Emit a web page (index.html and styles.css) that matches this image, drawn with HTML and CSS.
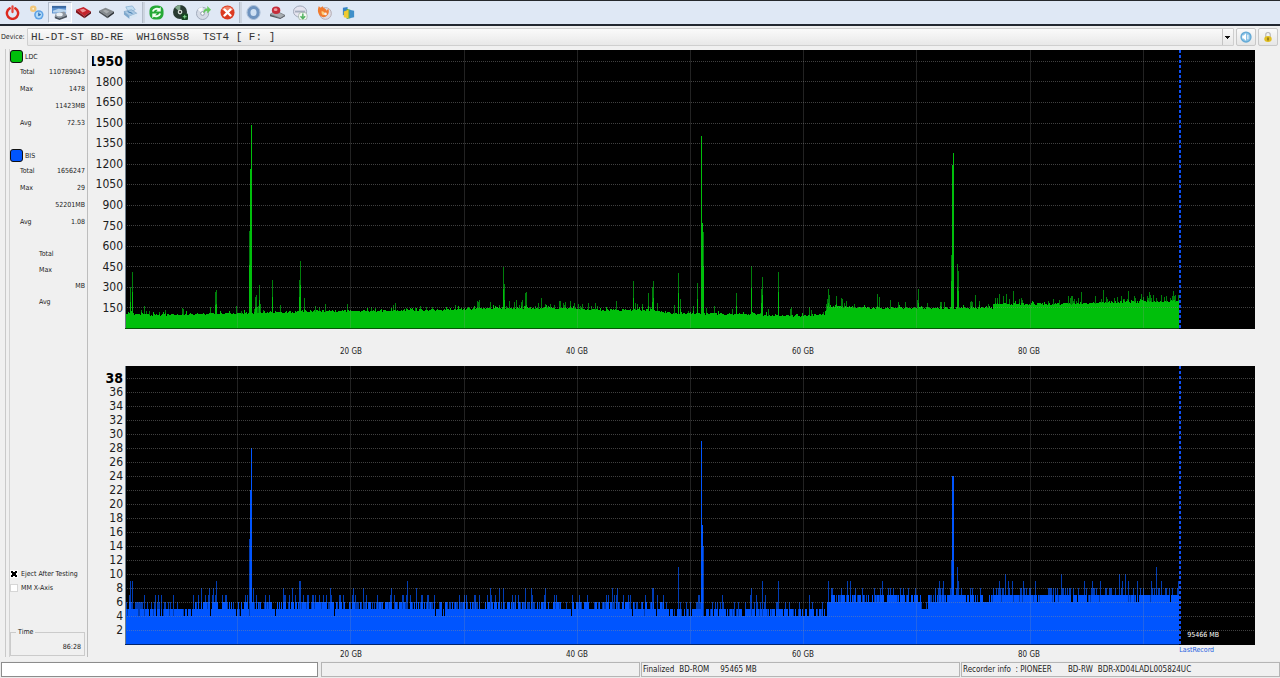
FILE: index.html
```html
<!DOCTYPE html>
<html lang="en">
<head>
<meta charset="utf-8">
<title>Disc quality scan</title>
<link rel="stylesheet" href="styles.css">
</head>
<body>
<div class="app">
  <header class="toolbar">
    <div class="tools tools-six">
      <button class="tool" aria-label="Exit"><svg viewBox="0 0 16 16"><path d="M5 3.6A6 6 0 1 0 11 3.6" fill="none" stroke="#dc2a20" stroke-width="2.6" stroke-linecap="round"/><path d="M8 1.5v6" stroke="#e8443a" stroke-width="2.4" stroke-linecap="round"/></svg></button>
      <button class="tool" aria-label="Settings"><svg viewBox="0 0 16 16"><circle cx="4.5" cy="4" r="3.5" fill="#f1c77b"/><circle cx="4.5" cy="4" r="1" fill="#fff4d8"/><circle cx="10.5" cy="10.5" r="5" fill="#5fa3e6"/><circle cx="10.5" cy="10.5" r="3.3" fill="#b5dcf8"/><path d="M10.5 8v3l2-1" fill="none" stroke="#286cb4" stroke-width="1.2"/></svg></button>
      <button class="tool tool-on" aria-label="Scan"><svg viewBox="0 0 16 16"><path d="M0 1h15v8H0z" fill="#5a8fcc"/><path d="M0 1h15v2H0z" fill="#39679f"/><path d="M1 6l6-2 8 1v3H1z" fill="#b9d4ed"/><path d="M4 9l9-2 3 4-8 3-5-2z" fill="#8c949e"/><ellipse cx="8" cy="10" rx="3.500" ry="2" fill="#e7edf2"/><path d="M3 12l5 2 8-3v2l-8 3-5-2z" fill="#4b535d"/></svg></button>
      <button class="tool" aria-label="Burn"><svg viewBox="0 0 16 16"><path d="M0 5l8-3 8 5-7 5z" fill="#c4232c"/><path d="M0 5l9 7v2L0 8z" fill="#80121a"/><path d="M16 7l-7 5v2l7-5z" fill="#5c1016"/><path d="M4 5l4-1 3 2-4 2z" fill="#ed9294"/></svg></button>
      <button class="tool" aria-label="Memory"><svg viewBox="0 0 16 16"><path d="M0 6l7-3 9 4-7 5z" fill="#858a8e"/><path d="M0 6l9 6v2L0 8z" fill="#4d5256"/><path d="M16 7l-7 5v2l7-5z" fill="#303438"/><path d="M4 6l3-1 4 2-3 2z" fill="#a9adb0"/></svg></button>
      <button class="tool" aria-label="Print"><svg viewBox="0 0 16 16"><path d="M3 2l7-1 3 4-7 3z" fill="#c0dcf2" stroke="#7fa9cd" stroke-width=".7"/><path d="M1 7l8-2 6 4-8 3z" fill="#a9c8e4" stroke="#7fa3c4" stroke-width=".7"/><path d="M1 7l6 5v3L1 10z" fill="#7da7cd"/><path d="M7 12l8-3v3l-8 3z" fill="#d8e7f4"/><path d="M5 7l5 2" stroke="#3974a8"/></svg></button>
    </div>
    <span class="divider"></span>
    <div class="tools tools-four">
      <button class="tool" aria-label="Refresh"><svg viewBox="0 0 16 16"><rect x=".5" y=".5" width="15" height="15" rx="6" fill="#25a936"/><path d="M4 7c1-3 5-4 7-2M12 9c-1 3-5 4-7 2" fill="none" stroke="#f2fff2" stroke-width="2"/><path d="M12.500 2v5h-5zM3.500 14V9h5z" fill="#f2fff2"/></svg></button>
      <button class="tool" aria-label="Read disc"><svg viewBox="0 0 16 16"><circle cx="7.500" cy="7.500" r="7.500" fill="#293b33"/><path d="M7.500 7.500L2 3a7 7 0 0 1 6-3z" fill="#81a88b"/><circle cx="7.500" cy="7.500" r="2.500" fill="#d4ddd7"/><circle cx="7.500" cy="7.500" r="1" fill="#111"/><rect x="9" y="9" width="7" height="7" rx="1" fill="#174723"/><path d="M10.500 12.500h4M12.500 10.500v4" stroke="#8ae399"/></svg></button>
      <button class="tool" aria-label="Create disc"><svg viewBox="0 0 16 16"><circle cx="7" cy="9" r="6.500" fill="#d5dbe6" stroke="#9fa9ba"/><path d="M7 9L2 5a6 6 0 0 1 5-3z" fill="#f7f8fc"/><circle cx="7" cy="9" r="2" fill="#fff" stroke="#8d98a9"/><path d="M8 9c0-4 1-5 4-5V1l4 4-4 4V6c-2 0-2 1-4 3z" fill="#65c95e"/></svg></button>
      <button class="tool" aria-label="Stop"><svg viewBox="0 0 16 16"><circle cx="8" cy="8" r="7.500" fill="#dc3a20"/><path d="M2 5a7 7 0 0 1 12 0c-3 2-9 2-12 0z" fill="#f08066"/><path d="M4.800 4.800l6.400 6.400M11.200 4.800l-6.400 6.400" stroke="#fff" stroke-width="2.600" stroke-linecap="round"/></svg></button>
    </div>
    <span class="divider"></span>
    <div class="tools tools-five">
      <button class="tool" aria-label="Disc"><svg viewBox="0 0 16 16"><ellipse cx="8" cy="8" rx="5" ry="5.500" fill="#cfe0f3" stroke="#6e93bf" stroke-width="3.500"/><ellipse cx="8" cy="8" rx="7" ry="7.500" fill="none" stroke="#a3b9d3"/></svg></button>
      <button class="tool" aria-label="Drive"><svg viewBox="0 0 16 16"><path d="M0 10l6-4 10 5-5 3z" fill="#a8adb2" stroke="#686d72" stroke-width=".7"/><path d="M0 10l11 4 5-3v1l-5 3L0 12z" fill="#55595e"/><ellipse cx="6.500" cy="5.500" rx="4.500" ry="4" fill="#c52c3a"/><ellipse cx="6" cy="5" rx="2" ry="1.500" fill="#efa0a5"/></svg></button>
      <button class="tool" aria-label="Save disc"><svg viewBox="0 0 16 16"><ellipse cx="7.500" cy="7" rx="7" ry="6" fill="#e5e4ef" stroke="#9ca3b4"/><path d="M2 7h11" stroke="#a5adbd" stroke-width="2"/><rect x="6" y="8" width="9" height="8" rx="3" fill="#f5faf5" stroke="#93a699" stroke-width=".7"/><path d="M10.500 9v5M8 12l2.500 2.500L13 12" fill="none" stroke="#56b463" stroke-width="1.600"/></svg></button>
      <button class="tool" aria-label="Burn image"><svg viewBox="0 0 16 16"><circle cx="9" cy="9" r="6.300" fill="#dddce4" stroke="#b3a9b0"/><path d="M2 1c2 3 3 1 4 0 0 3 4 2 4 5l2-2c2 4-1 9-5 9S-1 8 2 1z" fill="#f17b2f"/><path d="M5 6c2 2 3 0 3 3s-4 2-3-3z" fill="#ffd17e"/><circle cx="9" cy="9.500" r="1.500" fill="#f6eef0"/></svg></button>
      <button class="tool" aria-label="Charts"><svg viewBox="0 0 16 16"><path d="M2 3l5-1v8l-5 1z" fill="#3784c7"/><path d="M6 4l4 1v9l-4 1z" fill="#61ad46"/><path d="M9 5l5 1v7l-5 1z" fill="#3f8fc9"/><path d="M3 7l5-2v9l-5-1z" fill="#f0c92f"/></svg></button>
    </div>
  </header>

  <div class="device">
    <label for="drive">Device:</label>
    <select id="drive" class="drive"><option>HL-DT-ST&nbsp;BD-RE&nbsp;&nbsp;WH16NS58&nbsp;&nbsp;TST4&nbsp;[&nbsp;F:&nbsp;]</option></select>
    <button class="small-button" aria-label="Sound"><svg viewBox="0 0 16 16"><circle cx="8" cy="8" r="7.500" fill="#62a9d5"/><circle cx="8" cy="8" r="5.800" fill="#8cc3e6"/><path d="M3 6h2l3-3v10l-3-3H3z" fill="#fff"/><path d="M10.500 5v6" stroke="#fff" stroke-width="1.500"/></svg></button>
    <button class="small-button" aria-label="Lock"><svg viewBox="0 0 16 16"><path d="M5 8V5a3 3 0 0 1 6 0v3" fill="none" stroke="#b7b7b7" stroke-width="1.500"/><ellipse cx="8" cy="10.500" rx="5" ry="4" fill="#e1bf23"/><path d="M8 8.500v4" stroke="#695413" stroke-width="1.500"/></svg></button>
  </div>

  <main class="workspace">
    <aside class="panel">
      <section>
        <h2 class="series"><button class="swatch swatch-ldc" aria-label="LDC colour"></button>LDC</h2>
        <dl class="stats"><dt>Total</dt><dd>110789043</dd><dt>Max</dt><dd>1478</dd><dt></dt><dd>11423MB</dd><dt>Avg</dt><dd>72.53</dd></dl>
      </section>
      <section>
        <h2 class="series"><button class="swatch swatch-bis" aria-label="BIS colour"></button>BIS</h2>
        <dl class="stats"><dt>Total</dt><dd>1656247</dd><dt>Max</dt><dd>29</dd><dt></dt><dd>52201MB</dd><dt>Avg</dt><dd>1.08</dd></dl>
      </section>
      <dl class="stats stats-empty"><dt>Total</dt><dd></dd><dt>Max</dt><dd></dd><dt></dt><dd>MB</dd><dt>Avg</dt><dd></dd></dl>
      <div class="options">
        <label class="option"><input type="checkbox" class="tick" checked>Eject After Testing</label>
        <label class="option"><input type="checkbox" class="tick">MM X-Axis</label>
      </div>
      <fieldset class="time"><legend>Time</legend><output>86:28</output></fieldset>
    </aside>

    <div class="charts">
      <div class="scale scale-ldc"><b>1950</b><span>1800</span><span>1650</span><span>1500</span><span>1350</span><span>1200</span><span>1050</span><span>900</span><span>750</span><span>600</span><span>450</span><span>300</span><span>150</span></div>
      <div class="plot"><svg id="ldc" class="graph" viewBox="0 0 1130 279" preserveAspectRatio="none" role="img" aria-label="LDC errors"></svg></div>
      <div class="ticks"><span>20 GB</span><span>40 GB</span><span>60 GB</span><span>80 GB</span></div>
      <div class="scale scale-bis"><b>38</b><span>36</span><span>34</span><span>32</span><span>30</span><span>28</span><span>26</span><span>24</span><span>22</span><span>20</span><span>18</span><span>16</span><span>14</span><span>12</span><span>10</span><span>8</span><span>6</span><span>4</span><span>2</span></div>
      <div class="plot"><svg id="bis" class="graph" viewBox="0 0 1130 279" preserveAspectRatio="none" role="img" aria-label="BIS errors"></svg><span class="capacity">95466 MB</span><span class="last">LastRecord</span></div>
      <div class="ticks ticks-cut"><span>20 GB</span><span>40 GB</span><span>60 GB</span><span>80 GB</span></div>
    </div>
  </main>

  <footer class="status">
    <div class="cell cell-progress"></div>
    <div class="cell"></div>
    <div class="cell"><span>Finalized</span><span>BD-ROM</span><span class="wide">95465 MB</span></div>
    <div class="cell"><span>Recorder info&nbsp; : PIONEER</span><span class="wider">BD-RW</span><span>BDR-XD04LADL005824UC</span></div>
  </footer>
</div>
<script src="charts.js"></script>
</body>
</html>
```
FILE: styles.css
```css
* { box-sizing: border-box; }
body {
  margin: 0;
  background: #f0f0f0;
  color: #1c1c1c;
  font: 7px/10px "DejaVu Sans Condensed", "DejaVu Sans", sans-serif;
}
button, select, input { font: inherit; color: inherit; }
button { padding: 0; }
.app { display: flex; flex-direction: column; min-height: 100vh; }

.toolbar {
  display: flex;
  height: 26px;
  padding: 1px 0 1px 1px;
  background: #dfe8f5;
  border-top: 1px solid #26282c;
  border-bottom: 2px solid #222730;
}
.tools { display: grid; }
.tools-six { width: 141px; grid-template-columns: repeat(6, 1fr); }
.tools-four { width: 94px; grid-template-columns: repeat(4, 1fr); }
.tools-five { width: 118px; grid-template-columns: repeat(5, 1fr); }
.tool { display: grid; place-items: center; border: 0; background: none; }
.tool svg { width: 15px; height: 15px; }
.tool-on { background: #e9eff9; border: 1px solid #b3bdcc; border-right-color: #fff; border-bottom-color: #fff; }
.divider { width: 3px; background: #cdd5e0; border-left: 1px solid #b4bdca; }

.device { display: flex; align-items: center; height: 21px; padding: 0 2px 0 1px; }
.device label { width: 26px; }
.drive {
  appearance: none;
  flex: 1;
  height: 18px;
  padding: 0 14px 0 3px;
  border: 1px solid #cfcfcf;
  border-radius: 1px;
  background:
    linear-gradient(#111, #111) right 3px top 7px / 5px 1px no-repeat,
    linear-gradient(#111, #111) right 4px top 8px / 3px 1px no-repeat,
    linear-gradient(#111, #111) right 5px top 9px / 1px 1px no-repeat,
    linear-gradient(#c4c4c4, #c4c4c4) right 10px center / 1px 16px no-repeat,
    linear-gradient(#fafafa, #e8e8e8);
  color: #333;
  font: 11px/16px "Liberation Mono", monospace;
}
.small-button {
  display: grid;
  place-items: center;
  width: 20px;
  height: 18px;
  margin-left: 2px;
  border: 1px solid #c8c8c8;
  border-radius: 2px;
  background: linear-gradient(#fafafa, #e6e6e6);
}
.small-button svg { width: 12px; height: 12px; }

.workspace { display: flex; flex: 1; padding: 2px 25px 4px 5px; }
.panel {
  display: flex;
  flex-direction: column;
  width: 83px;
  padding: 0 2px 1px 1px;
  border-left: 1px solid #c9c9c9;
  border-right: 1px solid #bdbdbd;
  box-shadow: inset 3px 0 #f0f0f0, inset 4px 0 #d2d2d2;
}
.panel section { padding-left: 3px; margin-bottom: 17px; }
.series { display: flex; align-items: center; gap: 2px; height: 15px; margin: 0; font-size: 7px; font-weight: normal; }
.swatch { width: 13px; height: 13px; border: 1px solid #111; border-radius: 3px; }
.swatch-ldc { background: #00bf0b; }
.swatch-bis { background: #0055ff; }
.stats { display: grid; grid-template-columns: auto 1fr; grid-template-rows: repeat(4, 1fr); align-items: center; height: 67px; margin: 0; }
.stats dt { padding-left: 10px; min-width: 24px; }
.stats dd { margin: 0; text-align: right; }
.stats-empty { height: 64px; padding-left: 22px; margin-top: -1px; }
.options { margin-top: auto; }
.option { display: flex; align-items: center; gap: 3px; height: 14px; padding-left: 3px; white-space: nowrap; }
.tick { appearance: none; flex: none; width: 8px; height: 8px; margin: 0; border: 1px solid #d6d6d6; background: #fff; }
.tick:checked {
  border-color: #fff;
  background:
    linear-gradient(45deg, transparent 36%, #000 36%, #000 64%, transparent 64%),
    linear-gradient(135deg, #fff 36%, #000 36%, #000 64%, #fff 64%);
}
.time { height: 29px; margin: 32px 0 0 3px; padding: 4px 3px 0; border: 1px solid #cbcbcb; text-align: right; }
.time legend { margin-left: 2px; padding: 0 2px; text-align: left; }
.time output { display: block; line-height: 12px; }

.charts {
  display: grid;
  flex: 1;
  grid-template-columns: 31px 1fr;
  grid-template-rows: 1fr 37px 1fr 12px;
  column-gap: 2px;
  margin-left: 4px;
  padding-top: 1px;
}
.scale {
  display: grid;
  grid-template-columns: minmax(0, 1fr);
  grid-auto-rows: 1fr;
  overflow: hidden;
  font-size: 12px;
  line-height: 14px;
}
.scale-ldc { padding: 1px 0 11px; }
.scale-bis { padding: 5px 0 8px; }
.scale > * { display: flex; align-items: center; justify-content: flex-end; min-height: 0; }
.scale b { color: #000; font-size: 14px; }
.plot { position: relative; background: #000; }
.graph { position: absolute; inset: 0; width: 100%; height: 100%; }
.area-ldc { fill: #00bf0b; }
.area-bis { fill: #0055ff; }
.dim-ldc { fill: #007f0b; }
.dim-bis { fill: #003cb4; }
.edge-ldc { fill: #075507; }
.edge-bis { fill: #00246e; }
.row-line { stroke: #8f8f8f; stroke-opacity: .45; stroke-dasharray: 1 1; }
.column-line { stroke: #9a9a9a; stroke-opacity: .22; }
.end-line { stroke: #0f4ef0; stroke-dasharray: 3 2; stroke-width: 2; }
.start-line { fill: #6f7d89; }
.capacity, .last { position: absolute; line-height: 10px; }
.capacity { left: 94%; bottom: 5px; color: #fff; }
.last { left: 93.300%; top: 100%; color: #1f5fe0; }
.ticks {
  display: grid;
  grid-column: 2;
  grid-template-columns: repeat(10, 1fr);
  align-items: center;
  padding-top: 8px;
  font-size: 8px;
  text-align: center;
  overflow: hidden;
}
.ticks span { grid-column: span 2; }
.ticks span:first-child { grid-column: 2 / span 2; }
.ticks-cut { align-items: start; padding-top: 5px; }

.status { display: grid; grid-template-columns: repeat(4, 1fr); gap: 1px; height: 17px; padding: 1px 0 1px 1px; background: #ececec; font-size: 8px; }
.cell { display: flex; align-items: center; gap: 5px; padding: 1px 0 0 1px; border: 1px solid #b5b5b5; background: #f0f0f0; white-space: nowrap; overflow: hidden; }
.cell-progress { margin-right: 2px; border-color: #8c8c8c; background: #fff; }
.wide { margin-left: 6px; }
.wider { margin-left: 11px; }
```
FILE: charts.js
```js
const ORIGIN = 125, WIDTH = 1130, HEIGHT = 279, END = 1179;

function generator(seed) {
  return () => {
    seed = (seed * 1664525 + 1013904223) >>> 0;
    return seed / 4294967296;
  };
}

function interpolate(points, x) {
  for (let i = 1; i < points.length; i++) {
    const [x0, y0] = points[i - 1], [x1, y1] = points[i];
    if (x <= x1) return y0 + (y1 - y0) * (x - x0) / (x1 - x0);
  }
  return points[points.length - 1][1];
}

function bar(x, height) {
  return `M${x - ORIGIN} ${HEIGHT}v${-height}h1v${height}z`;
}

function draw(id, area, dim, rows, step, zero) {
  let out = `<path class="dim-${id}" d="${dim}"/><path class="area-${id}" d="${area}"/>`;
  for (let i = 1; i <= rows; i++) {
    const y = Math.round(zero - i * step) + 0.5;
    out += `<path class="row-line" d="M0 ${y}H${WIDTH}"/>`;
  }
  for (let i = 1; i < 10; i++) {
    const x = Math.round(i * 113.2 - 1) + 0.5;
    out += `<path class="column-line" d="M${x} 0V${HEIGHT}"/>`;
  }
  out += `<rect class="start-line" width="1" height="${HEIGHT}"/>`;
  out += `<rect class="edge-${id}" y="${HEIGHT - 1}" width="${END - ORIGIN}" height="1"/>`;
  out += `<path class="end-line" d="M${END - ORIGIN + 1} 0V${HEIGHT}"/>`;
  document.getElementById(id).innerHTML = out;
}

/* LDC: base curve and isolated peaks, [position, height] */
const ldcBase = [[125, 15], [150, 13], [290, 16], [300, 17], [370, 17], [470, 19], [480, 20], [560, 20], [600, 18], [650, 18], [670, 15], [730, 14], [800, 12], [825, 14], [827, 22], [880, 20], [992, 20], [993, 24], [1060, 24], [1120, 26], [1179, 27]];
const ldcPeaks = [[130, 42], [132, 57], [144, 23], [215, 37], [216, 39], [249, 98], [255, 32], [256, 34], [259, 44], [260, 25], [272, 49], [299, 49], [300, 68], [304, 31], [477, 28], [479, 29], [503, 62], [504, 45], [525, 36], [526, 37], [541, 31], [560, 28], [563, 26], [574, 26], [616, 28], [633, 48], [648, 36], [652, 42], [653, 48], [678, 56], [680, 30], [697, 46], [703, 97], [736, 36], [751, 63], [761, 40], [762, 52], [778, 57], [791, 22], [809, 22], [827, 30], [828, 40], [829, 34], [836, 33], [841, 31], [846, 28], [877, 35], [879, 32], [917, 29], [918, 40], [951, 74], [957, 65], [958, 58], [975, 34], [979, 28], [999, 35], [1006, 35], [1013, 38], [1019, 30], [1081, 37], [1095, 33], [1103, 39], [1128, 38], [1135, 31], [1147, 33], [1149, 37], [1156, 31], [1164, 32], [1173, 38], [1174, 33]];
const ldcMain = [[250, 160], [251, 204], [701, 193], [702, 106], [952, 164], [953, 176]];
{
  const next = generator(41);
  let area = "", dim = "";
  for (let x = ORIGIN; x < END; x++) {
    const base = interpolate(ldcBase, x);
    const busy = (x > 475 && x < 600) || x > 993;
    area += bar(x, Math.round(base + next() * 2 + (next() < 0.1 ? 2 : 0)));
    if (next() < (busy ? 0.22 : 0.08)) dim += bar(x, Math.round(base + 3 + next() * 6));
  }
  for (const [x, h] of ldcPeaks) {
    dim += bar(x, h);
    area += bar(x, Math.round(h * 0.65));
  }
  for (const [x, h] of ldcMain) area += bar(x, h);
  draw("ldc", area, dim, 13, 20.55, 278);
}

/* BIS: whole-number error levels, seven units high each */
const bisPeaks = [[130, 9], [132, 9], [144, 7], [161, 7], [173, 7], [193, 7], [209, 8], [216, 9], [249, 15], [283, 8], [299, 9], [300, 9], [330, 8], [363, 8], [407, 9], [490, 8], [499, 8], [503, 8], [525, 8], [531, 8], [612, 8], [617, 8], [652, 8], [653, 8], [678, 11], [703, 14], [751, 8], [762, 9], [778, 9], [828, 9], [847, 9], [939, 9], [943, 9], [951, 12], [957, 11], [958, 9], [999, 9], [1005, 10], [1008, 9], [1012, 9], [1023, 9], [1061, 10], [1092, 9], [1119, 10], [1125, 10], [1128, 9], [1156, 11], [1151, 9], [1161, 9], [1178, 9]];
const bisMain = [[250, 22], [251, 28], [701, 29], [702, 17], [952, 24], [953, 24]];
{
  const next = generator(97);
  let area = "", dim = "";
  for (let x = ORIGIN; x < END; x++) {
    const low = (x > 133 && x < 195) || (x > 663 && x < 827);
    let level = x < 827 ? 5 : 6;
    const r = next();
    if (x < 827) {
      if (low) level = r < (x > 663 ? 0.4 : 0.25) ? 4 : 5;
      else level = r < 0.04 ? 4 : r > 0.62 ? 6 : 5;
    } else if ((x > 947 && x < 965) || x > 990) level = r < 0.14 ? 6 : 7;
    else level = x > 920 && x < 928 ? 5 : r > 0.55 ? 7 : 6;
    area += bar(x, level * 7 + 1);
    const chance = next();
    if (chance < 0.35) dim += bar(x, (level + 1) * 7 + 1);
    if (chance < 0.05) dim += bar(x, (level + 2) * 7 + 1);
  }
  for (const [x, v] of bisPeaks) dim += bar(x, v * 7 + 1);
  for (const [x, v] of bisMain) area += bar(x, v * 7 + 1);
  draw("bis", area, dim, 19, 14, 278);
}
```
